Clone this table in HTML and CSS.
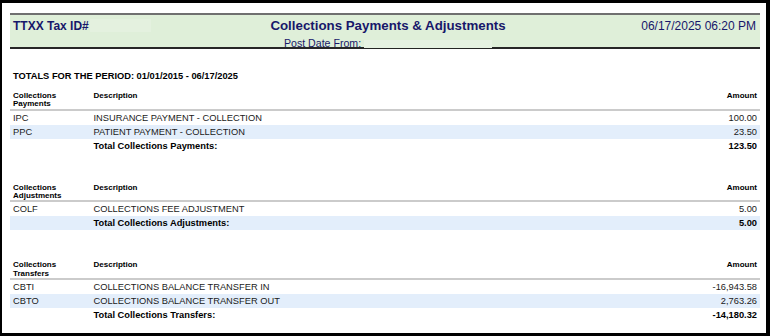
FILE: index.html
```html
<!DOCTYPE html>
<html>
<head>
<meta charset="utf-8">
<link rel="stylesheet" href="styles.css">
</head>
<body>
<div class="frame">
  <div class="header">
    <div class="h-left"><span class="tax-id">TTXX Tax ID#</span><span class="redact redact-id"></span></div>
    <div class="h-center">
      <div class="title">Collections Payments &amp; Adjustments</div>
      <div class="post-date">Post Date From: <span class="redact redact-date"></span></div>
    </div>
    <div class="h-right">06/17/2025 06:20 PM</div>
  </div>

  <div class="period">TOTALS FOR THE PERIOD: 01/01/2015 - 06/17/2025</div>

  <div class="section first">
    <div class="row head"><div class="c1">Collections<br>Payments</div><div class="c2">Description</div><div class="c3">Amount</div></div>
    <div class="row"><div class="c1">IPC</div><div class="c2">INSURANCE PAYMENT - COLLECTION</div><div class="c3">100.00</div></div>
    <div class="row alt"><div class="c1">PPC</div><div class="c2">PATIENT PAYMENT - COLLECTION</div><div class="c3">23.50</div></div>
    <div class="row total"><div class="c1"></div><div class="c2">Total Collections Payments:</div><div class="c3">123.50</div></div>
  </div>

  <div class="section">
    <div class="row head"><div class="c1">Collections<br>Adjustments</div><div class="c2">Description</div><div class="c3">Amount</div></div>
    <div class="row"><div class="c1">COLF</div><div class="c2">COLLECTIONS FEE ADJUSTMENT</div><div class="c3">5.00</div></div>
    <div class="row alt total"><div class="c1"></div><div class="c2">Total Collections Adjustments:</div><div class="c3">5.00</div></div>
  </div>

  <div class="section">
    <div class="row head"><div class="c1">Collections<br>Transfers</div><div class="c2">Description</div><div class="c3">Amount</div></div>
    <div class="row"><div class="c1">CBTI</div><div class="c2">COLLECTIONS BALANCE TRANSFER IN</div><div class="c3">-16,943.58</div></div>
    <div class="row alt"><div class="c1">CBTO</div><div class="c2">COLLECTIONS BALANCE TRANSFER OUT</div><div class="c3">2,763.26</div></div>
    <div class="row total"><div class="c1"></div><div class="c2">Total Collections Transfers:</div><div class="c3">-14,180.32</div></div>
  </div>
</div>
</body>
</html>
```
FILE: styles.css
```css
html, body {
  margin: 0;
  padding: 0;
  background: #000;
}
body {
  font-family: "Liberation Sans", Arial, sans-serif;
  color: #1a1a1a;
}
.frame {
  box-sizing: border-box;
  width: 770px;
  height: 336px;
  background: #fff;
  border-style: solid;
  border-color: #000;
  border-width: 3px 4px 3px 2px;
  padding: 10px 6px 0 8px;
  overflow: hidden;
}
.header {
  box-sizing: border-box;
  height: 36px;
  background: #dfefd9;
  border-top: 2px solid #707070;
  border-bottom: 2px solid #262626;
  padding: 2.5px 4px 0 3px;
  display: grid;
  grid-template-columns: 1fr auto 1fr;
  color: #17176a;
}
.h-left {
  display: flex;
  align-items: center;
  align-self: start;
  height: 16px;
}
.tax-id {
  font-weight: bold;
  font-size: 12px;
  line-height: 16px;
}
.redact {
  display: inline-block;
}
.redact-id {
  width: 61px;
  height: 13px;
  margin-left: 1px;
  background: #e4f1df;
}
.h-center {
  margin-left: 7px;
  text-align: center;
}
.title {
  font-weight: bold;
  font-size: 13.3px;
  line-height: 16px;
  white-space: nowrap;
}
.post-date {
  font-size: 10.6px;
  line-height: 12px;
  margin-top: 3px;
  white-space: nowrap;
}
.redact-date {
  width: 128px;
  height: 8px;
  background: #e6f2e2;
  vertical-align: -1px;
}
.h-right {
  text-align: right;
  font-size: 12px;
  line-height: 16px;
  align-self: start;
}
.period {
  margin-top: 20.8px;
  padding-left: 3px;
  font-weight: bold;
  font-size: 9.3px;
  line-height: 12px;
  color: #000;
}
.section {
  margin-top: 31px;
  width: 750px;
}
.section.first {
  margin-top: 10.3px;
}
.row {
  display: grid;
  grid-template-columns: 83px 1fr 140px;
  height: 14px;
  align-items: center;
  font-size: 9.3px;
  line-height: 12px;
}
.row.alt {
  background: #e3eefb;
}
.row.head {
  height: 16.6px;
  align-items: start;
  border-bottom: 2px solid #cbcbcb;
  font-weight: bold;
  font-size: 8px;
  line-height: 8.3px;
  color: #000;
}
.row.total {
  font-weight: bold;
  color: #000;
}
.c1 {
  padding-left: 3px;
  white-space: nowrap;
}
.c2 {
  padding-left: 0.5px;
  white-space: nowrap;
}
.c3 {
  text-align: right;
  padding-right: 3px;
  white-space: nowrap;
}
```
